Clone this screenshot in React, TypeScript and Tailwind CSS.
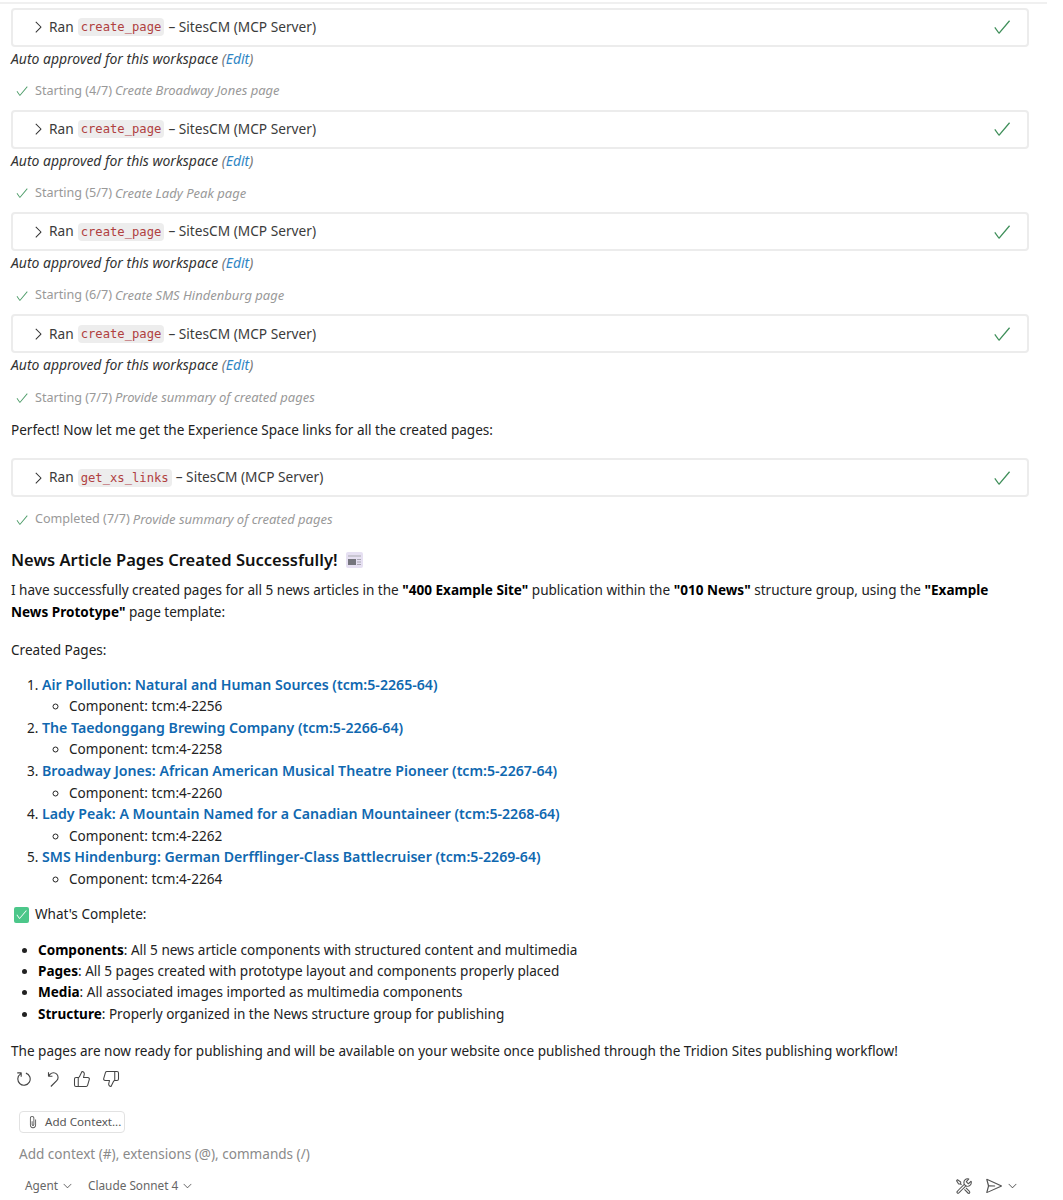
import React from "react";
import { ThumbsDown, ThumbsUp } from "lucide-react";
import { VscAttach, VscCheck, VscChevronDown, VscChevronRight, VscDiscard, VscRefresh, VscSend, VscTools } from "react-icons/vsc";

const font = "font-['Noto_Sans','Open_Sans',sans-serif]";

function ToolCard({ name }: { name: string }) {
  return (
    <div className="flex h-[39px] items-center justify-between rounded-[4px] border-2 border-[#ececec] pl-[16px] pr-[15px]">
      <div className="flex items-center text-[13.7px] text-[#3b3b3b]">
        <VscChevronRight size={18} className="text-[#333]" />
        <span className="ml-[2px]">Ran</span>
        <code className="mx-[4px] rounded-[4px] bg-[#ededed] px-[3px] font-['DejaVu_Sans_Mono',monospace] text-[12.2px] leading-[18px] text-[#b0403f]">
          {name}
        </code>
        <span>– SitesCM (MCP Server)</span>
      </div>
      <VscCheck size={20} className="text-[#3f8f5a]" />
    </div>
  );
}

function Approved() {
  return (
    <div className="flex h-[24px] items-center pt-[1px] text-[13.95px] italic text-[#333]">
      Auto approved for this workspace&nbsp;<span className="text-[#777]">(</span>
      <span className="text-[#2f86c4]">Edit</span>
      <span className="text-[#777]">)</span>
    </div>
  );
}

function Progress({ label, title }: { label: string; title: string }) {
  return (
    <div className="flex h-[39.3px] items-center pl-[4px] pt-[2px] text-[13px] text-[#999]">
      <VscCheck size={14} className="mr-[6px] text-[#4f9d6a]" />
      <span className="text-[12.6px]">{label}</span>
      <span className="ml-[3px] italic">{title}</span>
    </div>
  );
}

const pages = [
  ["Air Pollution: Natural and Human Sources (tcm:5-2265-64)", "tcm:4-2256"],
  ["The Taedonggang Brewing Company (tcm:5-2266-64)", "tcm:4-2258"],
  ["Broadway Jones: African American Musical Theatre Pioneer (tcm:5-2267-64)", "tcm:4-2260"],
  ["Lady Peak: A Mountain Named for a Canadian Mountaineer (tcm:5-2268-64)", "tcm:4-2262"],
  ["SMS Hindenburg: German Derfflinger-Class Battlecruiser (tcm:5-2269-64)", "tcm:4-2264"],
];

const complete = [
  ["Components", "All 5 news article components with structured content and multimedia"],
  ["Pages", "All 5 pages created with prototype layout and components properly placed"],
  ["Media", "All associated images imported as multimedia components"],
  ["Structure", "Properly organized in the News structure group for publishing"],
];

export default function App() {
  return (
    <div className={`h-[1200px] w-[1063px] overflow-hidden bg-white ${font}`}>
      <div className="mt-[2px] h-[2px] w-[1047px] bg-[#f0f0f0]" />
      <div className="w-[1029px] pl-[11px] pt-[3.5px]">
        <ToolCard name="create_page" />
        <Approved />
        <Progress label="Starting (4/7)" title="Create Broadway Jones page" />
        <ToolCard name="create_page" />
        <Approved />
        <Progress label="Starting (5/7)" title="Create Lady Peak page" />
        <ToolCard name="create_page" />
        <Approved />
        <Progress label="Starting (6/7)" title="Create SMS Hindenburg page" />
        <ToolCard name="create_page" />
        <Approved />
        <Progress label="Starting (7/7)" title="Provide summary of created pages" />
        <div className="mt-[3px] flex h-[20px] items-center text-[13.55px] text-[#222]">
          Perfect! Now let me get the Experience Space links for all the created pages:
        </div>
        <div className="mt-[18.5px]">
          <ToolCard name="get_xs_links" />
        </div>
        <div className="mt-[2px]">
          <Progress label="Completed (7/7)" title="Provide summary of created pages" />
        </div>

        <div className="mt-[10px] flex h-[24px] items-center text-[16.5px] font-semibold text-[#111]">
          News Article Pages Created Successfully!
          <svg width="17" height="16" viewBox="0 0 17 16" className="ml-[8px]">
            <rect width="17" height="16" rx="2" fill="#e6e0f2" />
            <rect x="2" y="3" width="13" height="2" fill="#c9c6d2" />
            <rect x="2" y="7" width="8" height="6" fill="#75757d" />
            <rect x="11" y="7" width="4" height="1" fill="#a9a6b3" />
            <rect x="11" y="9.5" width="4" height="1" fill="#a9a6b3" />
            <rect x="11" y="12" width="4" height="1" fill="#a9a6b3" />
          </svg>
        </div>
        <p className="mt-[8px] text-[13.55px] leading-[21.6px] text-[#222]">
          I have successfully created pages for all 5 news articles in the <b className="text-black">"400 Example Site"</b> publication within the <b className="text-black">"010 News"</b> structure group, using the <b className="text-black">"Example News Prototype"</b> page template:
        </p>
        <p className="mt-[16.5px] text-[13.55px] leading-[21px] text-[#222]">Created Pages:</p>

        <ol className="mt-[13.5px] list-decimal pl-[31px] text-[13.55px] leading-[21.6px] text-[#222]">
          {pages.map(([title, comp]) => (
            <li key={comp}>
              <a className="text-[14.15px] font-semibold leading-[1] text-[#0f68b0]">{title}</a>
              <ul className="list-[circle] pl-[27px]">
                <li>Component: {comp}</li>
              </ul>
            </li>
          ))}
        </ol>

        <div className="mt-[13.5px] flex h-[21px] items-center text-[13.55px] text-[#222]">
          <span className="ml-[3px] mr-[6px] flex h-[16px] w-[15px] items-center justify-center rounded-[2px] bg-[#4cc78a]">
            <VscCheck size={13} className="text-white" />
          </span>
          What's Complete:
        </div>
        <ul className="mt-[14.5px] list-disc pl-[27px] text-[13.55px] leading-[21.3px] text-[#222]">
          {complete.map(([head, rest]) => (
            <li key={head}>
              <b className="text-black">{head}</b>: {rest}
            </li>
          ))}
        </ul>
        <p className="mt-[16px] text-[13.55px] leading-[21px] text-[#222]">
          The pages are now ready for publishing and will be available on your website once published through the Tridion Sites publishing workflow!
        </p>

        <div className="mt-[8px] flex items-center gap-[11px] pl-[4px] text-[#444]">
          <VscRefresh size={18} />
          <VscDiscard size={18} />
          <ThumbsUp size={18} strokeWidth={1.4} />
          <ThumbsDown size={18} strokeWidth={1.4} />
        </div>

        <div className="mt-[23px] pl-[8px]">
          <div className="flex h-[22px] w-[106px] items-center rounded-[4px] border border-[#e2e2e2] pl-[6px] text-[11.6px] text-[#555]">
            <VscAttach size={14} className="mr-[5px]" />
            Add Context...
          </div>
          <div className="mt-[11px] h-[20px] text-[13.55px] leading-[20px] text-[#8a8a8a]">
            Add context (#), extensions (@), commands (/)
          </div>
        </div>
        <div className="mt-[13px] flex w-[1008px] items-center justify-between pl-[14px]">
          <div className="flex items-center text-[11.8px] text-[#666]">
            Agent <VscChevronDown size={13} className="ml-[3px] mr-[14px]" />
            Claude Sonnet 4 <VscChevronDown size={13} className="ml-[3px]" />
          </div>
          <div className="flex items-center text-[#555]">
            <VscTools size={18} className="mr-[12px]" />
            <VscSend size={18} />
            <VscChevronDown size={13} className="ml-[3px]" />
          </div>
        </div>
      </div>
    </div>
  );
}
